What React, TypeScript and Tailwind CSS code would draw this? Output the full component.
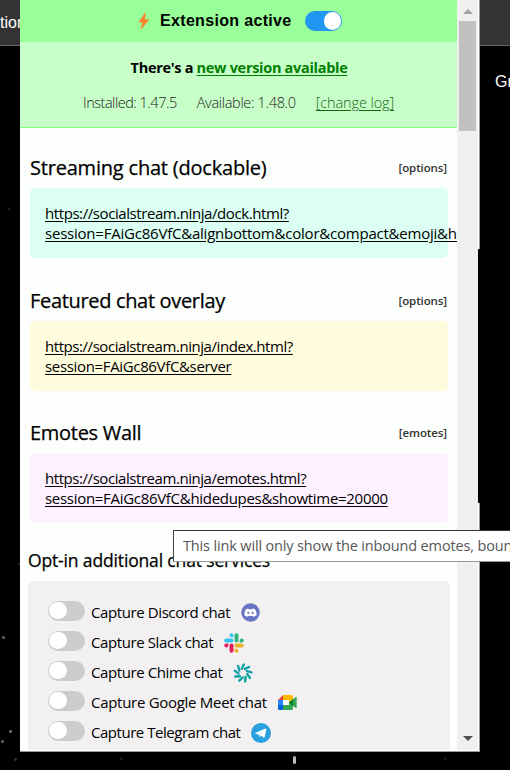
import React from "react";

const sans = "font-['Open_Sans','Noto_Sans',sans-serif]";

const stars = [
  "left-[8px] top-[208px] size-[2px] bg-[#2c2c2c]",
  "left-[18px] top-[563px] size-[2px] bg-[#333]",
  "left-[2px] top-[636px] size-[3px] bg-[#666]",
  "left-[9px] top-[730px] size-[3px] bg-[#777]",
  "left-[1px] top-[740px] size-[3px] bg-[#666]",
  "left-[14px] top-[758px] size-[3px] bg-[#333]",
  "left-[120px] top-[757px] size-[3px] bg-[#222]",
  "left-[293px] top-[756px] h-[8px] w-[3px] bg-[#bbb] blur-[0.7px]",
  "left-[444px] top-[757px] size-[3px] bg-[#1c1818]",
];

function Switch({ on = false }: { on?: boolean }) {
  return (
    <span className={`flex h-5 w-[37px] shrink-0 items-center rounded-full px-px ${on ? "justify-end bg-[#2196f3]" : "bg-[#ccc]"}`}>
      <span className="size-[17.5px] rounded-full bg-white" />
    </span>
  );
}

function LinkSection(props: { title: string; titleClass: string; action: string; first: string; firstClass: string; second: string; secondClass: string; color: string }) {
  return (
    <section className="mb-[30px] h-[102.5px] pl-[10px] pr-[9px]">
      <div className="flex h-8 items-start justify-between">
        <h2 className={`text-[20px] leading-6 [-webkit-text-stroke:0.25px_black] ${props.titleClass}`}>{props.title}</h2>
        <span className="pr-px text-[11.5px] font-semibold leading-[23px] tracking-[-0.1px] text-[#333]">{props.action}</span>
      </div>
      <div className={`h-[70px] whitespace-nowrap rounded-[5px] px-[15px] pt-[15px] text-[15px] leading-5 underline underline-offset-2 ${props.color}`}>
        <div className={props.firstClass}>{props.first}</div>
        <div className={props.secondClass}>{props.second}</div>
      </div>
    </section>
  );
}

function Discord() {
  return (
    <svg className="size-[19px]" viewBox="0 0 20 20">
      <circle cx="10" cy="10" r="9.7" fill="#6675c4" />
      <path d="M7.5 5.9c-1.3.2-2.3.8-2.5 1-1 1.8-1.5 3.9-1.4 6 1 .9 2 1.4 3.2 1.5l.7-1.1c1.7.5 3.4.5 5 0l.8 1.1c1.200-.2 2.200-.7 3.100-1.500.1-2.200-.3-4.200-1.400-6-.7-.5-1.500-.9-2.500-1l-.4.7H7.900z" fill="#fff" />
      <circle cx="7.700" cy="10.300" r="1.200" fill="#6675c4" />
      <circle cx="12.300" cy="10.300" r="1.200" fill="#6675c4" />
    </svg>
  );
}

function Slack() {
  return (
    <svg className="size-5" viewBox="0 0 20 20" fill="none" strokeWidth="4" strokeLinecap="round">
      <path d="M2.200 7.500H7.500" stroke="#36c5f0" />
      <path d="M5.500 2.300A2 2 0 0 1 9.500 2.300V4.300H7.500A2 2 0 0 1 5.500 2.300Z" fill="#36c5f0" />
      <path d="M12.500 2.200V7.500" stroke="#2eb67d" />
      <path d="M17.700 5.500A2 2 0 0 1 17.700 9.500H15.700V7.500A2 2 0 0 1 17.700 5.500Z" fill="#2eb67d" />
      <path d="M12.500 12.500H17.800" stroke="#ecb22e" />
      <path d="M14.500 17.700A2 2 0 0 1 10.500 17.700V15.700H12.500A2 2 0 0 1 14.500 17.700Z" fill="#ecb22e" />
      <path d="M7.500 12.500V17.800" stroke="#e01e5a" />
      <path d="M2.300 14.500A2 2 0 0 1 2.300 10.500H4.300V12.500A2 2 0 0 1 2.300 14.500Z" fill="#e01e5a" />
    </svg>
  );
}

function Chime() {
  return (
    <svg className="size-5" viewBox="-10 -10 20 20" stroke="#0fa0a5" strokeWidth="2.4" strokeLinecap="round">
      {[0, 40, 80, 120, 160, 200, 240, 280, 320].map((angle) => (
        <path key={angle} transform={`rotate(${angle})`} d="M-1.200 -4.300L0.800 -8.500" />
      ))}
    </svg>
  );
}

function Meet() {
  return (
    <svg className="h-[15px] w-[19px]" viewBox="0 0 19 15">
      <path d="M0 5L5 0V5Z" fill="#ea4335" />
      <path d="M0 5H5V10H0Z" fill="#2684fc" />
      <path d="M0 10H5V15H1.500Q0 15 0 13.500Z" fill="#0066da" />
      <path d="M5 0H13.500Q15 0 15 1.500V7L11 8V5H5Z" fill="#ffba00" />
      <path d="M5 5H11V10H5Z" fill="#fff" />
      <path d="M5 10H11V7L15 6V13.500Q15 15 13.500 15H5Z" fill="#34a853" />
      <path d="M11 7.500L17.800 2Q18.700 1.500 18.700 2.700V12.300Q18.700 13.500 17.800 13L11 7.500Z" fill="#34a853" />
      <path d="M11 7.500L15 4.200V10.800Z" fill="#00832d" />
    </svg>
  );
}

function Telegram() {
  return (
    <svg className="size-5" viewBox="0 0 20 20">
      <circle cx="10" cy="10" r="10" fill="#2aa1de" />
      <path d="M4.300 9.900L14.600 5.600Q15.500 5.400 15.300 6.400L13.600 14.200Q13.300 15 12.500 14.500L9.900 12.600L8.600 13.900Q8.100 14.200 8.100 13.500L7.600 11.400L4.400 10.500Q3.600 10.200 4.300 9.900Z" fill="#fff" />
      <path d="M7.600 11.400L13.200 7.500L9 11.800L8.300 13.900Z" fill="#b8dcef" />
    </svg>
  );
}

const services = [
  { label: "Capture Discord chat", style: "w-[150px] tracking-[-0.4px]", icon: <Discord /> },
  { label: "Capture Slack chat", style: "w-[133px] tracking-[-0.4px]", icon: <Slack /> },
  { label: "Capture Chime chat", style: "w-[142px] tracking-[-0.4px]", icon: <Chime /> },
  { label: "Capture Google Meet chat", style: "w-[187px] tracking-[-0.29px]", icon: <Meet /> },
  { label: "Capture Telegram chat", style: "w-[160px] tracking-[-0.47px]", icon: <Telegram /> },
];

export default function App() {
  return (
    <div className={`relative h-[770px] w-[510px] overflow-hidden bg-black text-black ${sans}`}>
      <div className="flex h-[46px] items-center border-b border-[#666] bg-[#333] font-['Liberation_Sans',sans-serif] text-[16px] text-white">tion</div>
      <div className="flex h-[72px] items-center justify-end overflow-hidden font-['Liberation_Sans',sans-serif] text-[16px] text-white">
        <span className="w-[15px] whitespace-nowrap">Gr</span>
      </div>
      {stars.map((star) => <i key={star} className={`absolute rounded-full ${star}`} />)}

      <div className="absolute left-5 top-0 flex h-[752px] w-[460px] border-b border-[#999] bg-[#fdfffd]">
        <main className="h-[750px] w-[437px] overflow-hidden">
          <header className="flex h-[42px] items-center bg-[#99ff99] pl-[118px] font-['Liberation_Sans',sans-serif]">
            <svg className="h-4 w-[11px]" viewBox="0 0 11 16"><path d="M7.300 0L1 9H4.800L3.300 15.700L10.800 6.700H6.600Z" fill="#ff822d" stroke="#ff822d" strokeWidth="0.8" strokeLinejoin="round" /></svg>
            <b className="ml-[11px] w-[145px] whitespace-nowrap pb-px text-[16px] tracking-[0.33px]">Extension active</b>
            <Switch on />
          </header>
          <div className="h-[86px] border-b border-[#7dff7d] bg-[#c8ffc8] text-center">
            <p className="pl-px pt-4 text-[14.500px] font-bold leading-5 tracking-[-0.3px]">
              There's a <span className="text-[#008000] underline underline-offset-2">new version available</span>
            </p>
            <div className="mt-[15px] flex justify-center gap-5 text-[14.500px] font-light leading-5 text-[#222]">
              <span className="tracking-[-0.48px]">Installed: 1.47.5</span>
              <span className="tracking-[-0.32px]">Available: 1.48.0</span>
              <span className="tracking-[-0.1px] text-[#176617] underline underline-offset-2">[change log]</span>
            </div>
          </div>

          <div className="pt-7">
            <LinkSection title="Streaming chat (dockable)" titleClass="tracking-[-0.2px]" action="[options]" color="bg-[#dbfff2]" first="https://socialstream.ninja/dock.html?" firstClass="tracking-[-0.42px]" second="session=FAiGc86VfC&alignbottom&color&compact&emoji&hi" secondClass="tracking-[-0.22px]" />
            <LinkSection title="Featured chat overlay" titleClass="tracking-[-0.33px]" action="[options]" color="bg-[#fffbdd]" first="https://socialstream.ninja/index.html?" firstClass="tracking-[-0.44px]" second="session=FAiGc86VfC&server" secondClass="tracking-[-0.34px]" />
            <LinkSection title="Emotes Wall" titleClass="tracking-[-0.28px]" action="[emotes]" color="bg-[#fdf0ff]" first="https://socialstream.ninja/emotes.html?" firstClass="tracking-[-0.44px]" second="session=FAiGc86VfC&hidedupes&showtime=20000" secondClass="tracking-[-0.3px]" />
          </div>

          <section className="-mt-[5px] pl-2 pr-[7px]">
            <h3 className="h-[32px] text-[17.500px] leading-[23px] tracking-[-0.15px] [-webkit-text-stroke:0.25px_black]">Opt-in additional chat services</h3>
            <ul className="rounded-t-[5px] bg-[#f3f0f2] pb-8 pl-5 pt-5">
              {services.map(({ label, style, icon }) => (
                <li key={label} className="flex h-[30px] items-start">
                  <Switch />
                  <span className={`ml-[6px] whitespace-nowrap text-[15px] leading-[22px] ${style}`}>{label}</span>
                  <span className="flex h-[24px] items-center">{icon}</span>
                </li>
              ))}
            </ul>
          </section>
        </main>
        <aside className="flex h-[750px] w-[21px] flex-col items-center bg-[#f0f0f0]">
          <svg className="h-[21px] w-[10px]" viewBox="0 0 10 21"><path d="M0 14L5 9L10 14Z" fill="#a3a3a3" /></svg>
          <div className="h-[110px] w-[17px] bg-[#c1c1c1]" />
          <svg className="mt-auto h-[24px] w-[10px]" viewBox="0 0 10 24"><path d="M0 10H10L5 15Z" fill="#505050" /></svg>
        </aside>
        <div className="flex w-[2px] flex-col">
          <div className="h-[249px] border-r border-[#999] bg-white" />
          <div className="h-[254px] bg-black" />
          <div className="flex-1 border-r border-[#999] bg-white" />
        </div>
      </div>

      <div className="absolute left-[173px] top-[530px] h-8 w-[360px] whitespace-nowrap border border-b-[#999] border-l-[#444] border-t-[#333] bg-white pl-[9px] text-[14.500px] leading-[30px] tracking-[-0.15px] text-[#575757]">
        This link will only show the inbound emotes, bouncing
      </div>
    </div>
  );
}
